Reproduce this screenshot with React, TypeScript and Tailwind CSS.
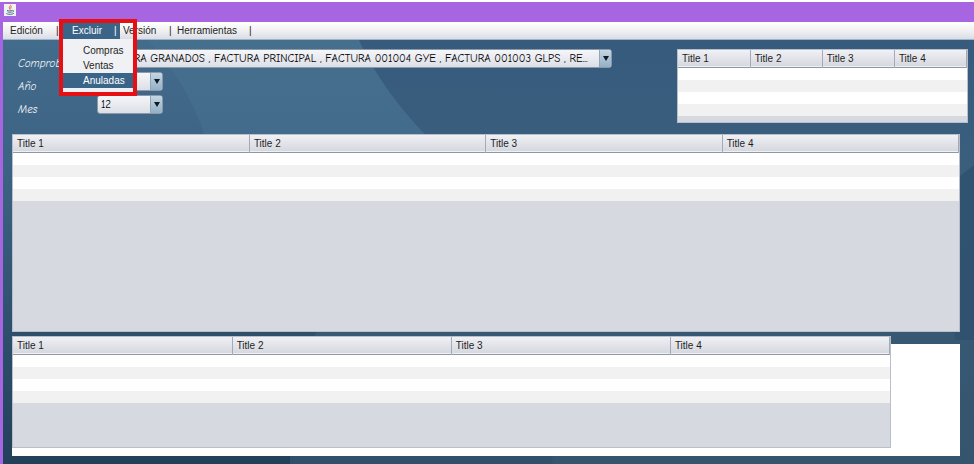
import { useState } from "react"

const columns = ["Title 1", "Title 2", "Title 3", "Title 4"]
const excludeItems = ["Compras", "Ventas", "Anuladas"]

function JavaIcon() {
  return (
    <svg viewBox="0 0 12 12" className="h-3 w-3 bg-[#f1f1f1]" aria-hidden="true">
      <path d="M6.6 0.8C7.4 2 4.6 2.8 5.4 4.2C5.7 4.8 6.1 5.1 6 5.8M7.8 2.6C6.4 3.2 6.6 4 6.9 4.8" fill="none" stroke="#e0662c" strokeWidth="1" />
      <path d="M3 6.4C4.5 7 7 7 8.3 6.4M3.5 7.9C5 8.4 6.8 8.4 7.8 7.9M8.4 6.4C10.2 6 10 7.8 8.3 8.2M2.4 9.6C4 10.6 8 10.6 9.8 9.4" fill="none" stroke="#4d7596" strokeWidth="1" />
    </svg>
  )
}

function Backdrop() {
  return (
    <svg viewBox="0 0 974 424" preserveAspectRatio="none" className="absolute inset-0 h-full w-full" aria-hidden="true">
      <defs>
        <linearGradient id="base" x1="0" y1="0" x2="0" y2="1">
          <stop offset="0" stopColor="#375b7d" />
          <stop offset="0.3" stopColor="#3a5e7c" />
          <stop offset="1" stopColor="#35546d" />
        </linearGradient>
        <linearGradient id="left" x1="0" y1="0" x2="0" y2="1">
          <stop offset="0" stopColor="#436b8b" />
          <stop offset="0.3" stopColor="#3d6384" />
          <stop offset="1" stopColor="#22405a" />
        </linearGradient>
      </defs>
      <rect width="974" height="424" fill="url(#base)" />
      <path d="M0 0H357C370 30 395 65 424 95L288 340V424H0Z" fill="url(#left)" />
      <path d="M145 0C172 30 192 62 202 95H424C395 65 370 30 357 0Z" fill="#4c7594" fillOpacity="0.4" />
      <path d="M288 380H558L550 424H288Z" fill="#2d4f6a" fillOpacity="0.6" />
      <path d="M974 125L955 140V300L974 300Z" fill="#2c4c6c" fillOpacity="0.6" />
    </svg>
  )
}

function TitleTable({ label, className }: { label: string; className: string }) {
  return (
    <div className={`border border-[#b9bfca] bg-[#d6d9e0] ${className}`}>
      <table aria-label={label} className="w-full table-fixed border-collapse">
        <thead>
          <tr className="h-[17px] border-b border-[#8f97a3] bg-linear-to-b from-[#f0f1f5] to-[#d5d8df]">
            {columns.map((title) => (
              <th key={title} className="border-r border-[#a5abb6] px-1 pt-0.5 pb-0 text-left text-[10px] leading-[14px] font-normal">
                {title}
              </th>
            ))}
          </tr>
        </thead>
        <tbody>
          {[0, 1, 2, 3].map((row) => (
            <tr key={row} className="h-3 bg-white first:h-[13px] even:bg-[#f1f1f2]">
              {columns.map((title) => (
                <td key={title} className="p-0" />
              ))}
            </tr>
          ))}
        </tbody>
      </table>
    </div>
  )
}

function ComboField({ id, label, options, className }: { id: string; label: string; options: string[]; className: string }) {
  return (
    <div className="flex h-[19px] items-center">
      <label htmlFor={id} className="w-[79px] shrink-0 pt-2.5 text-[11px] leading-[11px] text-[#f0f4f8] italic">
        {label}
      </label>
      <div className={`relative ${className}`}>
        <select
          id={id}
          className="block h-[19px] w-full appearance-none rounded-[3px] border border-[#8d99a8] bg-linear-to-b from-[#f5f6f9] to-[#dcdfe6] pr-4 pl-[3px] text-[11px] leading-4 text-black"
        >
          {options.map((option) => (
            <option key={option}>{option}</option>
          ))}
        </select>
        <span className="pointer-events-none absolute inset-y-px right-px flex w-3 items-center justify-center rounded-r-[2px] border-l border-[#8fa6b9] bg-linear-to-b from-[#c5d6e3] to-[#94b0c5]">
          <svg viewBox="0 0 6 5" className="h-[5px] w-[6px]" aria-hidden="true">
            <path d="M0 0H6L3 5Z" fill="#101a22" />
          </svg>
        </span>
      </div>
    </div>
  )
}

export default function App() {
  const [selected, setSelected] = useState("Anuladas")

  return (
    <div className="flex min-h-screen flex-col border-t-2 border-white bg-[#a865e2] font-['Liberation_Sans',Arial,sans-serif] text-[10px] text-[#1e1e1e]">
      <header className="flex h-5 items-start pt-0.5 pl-1">
        <JavaIcon />
      </header>

      <div className="ml-[3px] flex flex-1 flex-col">
        <nav className="relative z-10 flex h-[18px] items-center border-b border-[#9fb4c8] bg-linear-to-b from-white via-[#f1f1f3] to-[#d9dde4] leading-4">
          <button className="w-[59px] pl-[7px] text-left">
            <span className="inline-block w-[46px]">Edición</span>|
          </button>
          <div className="relative">
            <button aria-expanded="true" className="block w-[58px] bg-[#3a6588] pl-[10px] text-left text-white">
              <span className="inline-block w-[42px]">Excluir</span>|
            </button>
            <div role="menu" className="absolute top-full left-0 w-[72px] bg-[#f0f1f4] pt-1 pb-1">
              {excludeItems.map((item) => (
                <button
                  key={item}
                  role="menuitem"
                  onClick={() => setSelected(item)}
                  className={`block w-full pl-[21px] text-left leading-[15px] ${item === selected ? "bg-[#3a6588] text-white" : ""}`}
                >
                  {item}
                </button>
              ))}
            </div>
            <div className="pointer-events-none absolute -top-1 -left-[3px] h-[77px] w-[78px] border-4 border-[#e60f14]" />
          </div>
          <button className="w-[54px] pl-[3px] text-left">
            <span className="inline-block w-[46px]">Versión</span>|
          </button>
          <button className="pl-[3px] text-left">
            <span className="inline-block w-[72px]">Herramientas</span>|
          </button>
        </nav>

        <main className="relative flex flex-1 flex-col pb-2">
          <Backdrop />
          <div className="relative flex items-start justify-between gap-4 pt-[9px] pr-[6px] pl-[15px]">
            <form className="flex flex-col gap-1 font-['Comic_Sans_MS','Comic_Neue',Lato,sans-serif]">
              <ComboField
                id="comprobantes"
                label="Comprob"
                options={["FACTURA GRANADOS , FACTURA PRINCIPAL , FACTURA 001004 GYE , FACTURA 001003 GLPS , RE..."]}
                className="w-[515px]"
              />
              <ComboField id="anio" label="Año" options={["2016", "2015"]} className="w-[66px]" />
              <ComboField id="mes" label="Mes" options={["12", "11", "10"]} className="w-[66px]" />
            </form>
            <TitleTable label="Resumen" className="h-[74px] w-[291px]" />
          </div>

          <div className="relative flex flex-1 flex-col gap-1 pt-[11px] pr-[14px] pl-[9px]">
            <TitleTable label="Facturas" className="min-h-[198px] flex-1" />
            <div className="grid">
              <div className="col-start-1 row-start-1 mt-2 bg-white" />
              <TitleTable label="Detalle" className="col-start-1 row-start-1 mr-[69px] mb-2 h-[112px]" />
            </div>
          </div>
        </main>
      </div>
    </div>
  )
}
